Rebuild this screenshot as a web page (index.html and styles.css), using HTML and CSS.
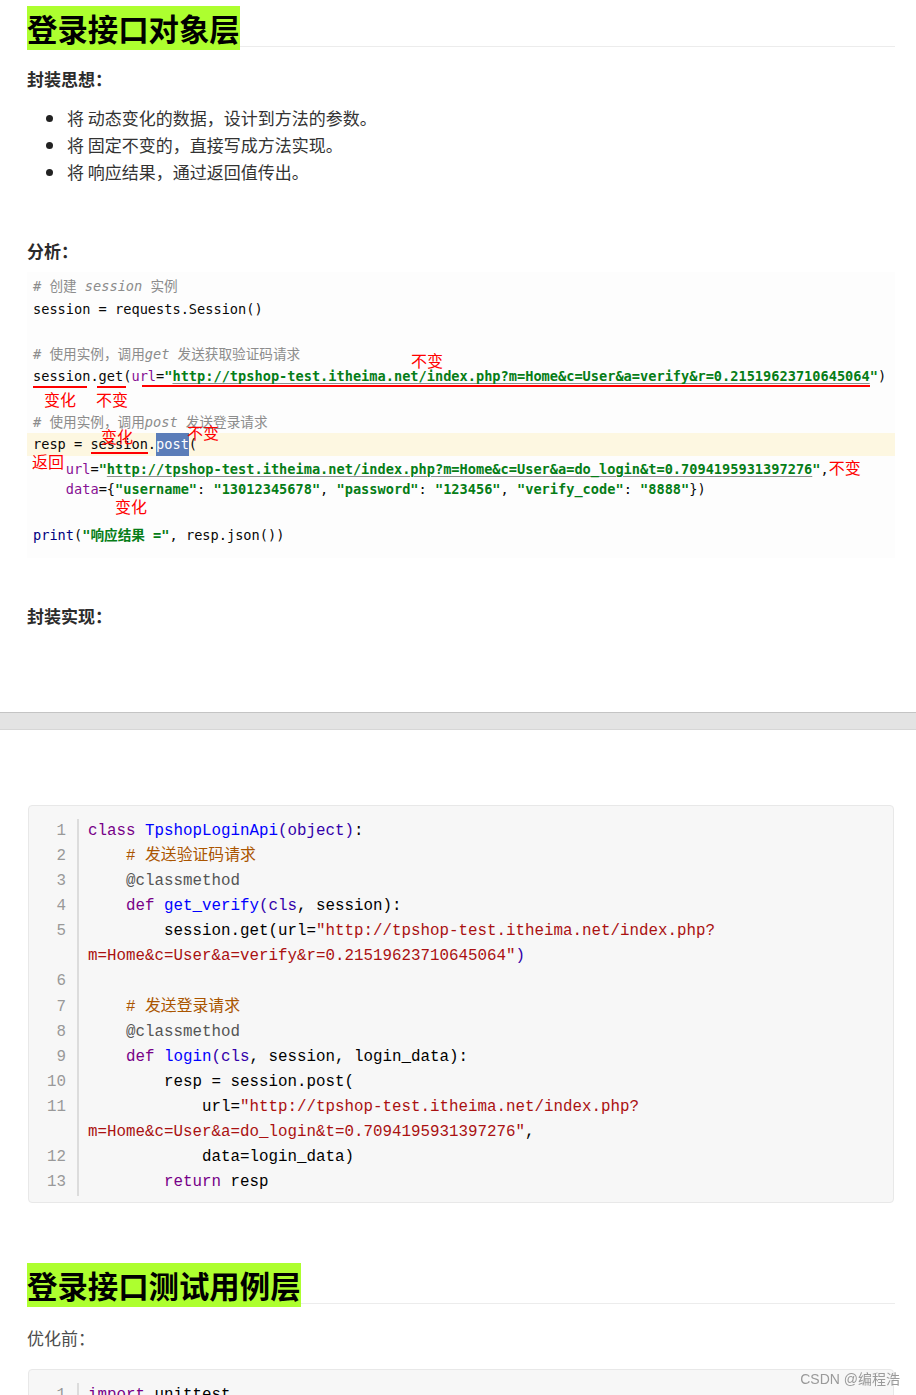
FILE: index.html
```html
<!DOCTYPE html>
<html lang="zh-CN">
<head>
  <meta charset="UTF-8" />
  <meta name="viewport" content="width=device-width, initial-scale=1.0"/>
  <title>登录接口对象层</title>
  <link rel="stylesheet" href="styles.css">
</head>
<body>
  <section class="article">
    <h2 class="title"><span class="mark">登录接口对象层</span></h2>
    <p class="label label-idea">封装思想：</p>
    <ul class="points">
      <li>将 动态变化的数据，设计到方法的参数。</li>
      <li>将 固定不变的，直接写成方法实现。</li>
      <li>将 响应结果，通过返回值传出。</li>
    </ul>
    <p class="label label-analyse">分析：</p>

    <div class="shot">
      <div class="row"><span class="c"># 创建 <i>session</i> 实例</span></div>
      <div class="row">session = requests.Session()</div>
      <div class="row"></div>
      <div class="row"><span class="c"># 使用实例，调用<i>get</i> 发送获取验证码请求</span></div>
      <div class="row">session.get(<span class="kw">url</span>=<span class="s">"<u>http://tpshop-test.itheima.net/index.php?m=Home&amp;c=User&amp;a=verify&amp;r=0.21519623710645064</u>"</span>)</div>
      <div class="row"></div>
      <div class="row"><span class="c"># 使用实例，调用<i>post</i> 发送登录请求</span></div>
      <div class="row row-current">resp = session.<span class="sel">post</span>(</div>
      <div class="row">    <span class="kw">url</span>=<span class="s">"<u>http://tpshop-test.itheima.net/index.php?m=Home&amp;c=User&amp;a=do_login&amp;t=0.7094195931397276</u>"</span>,<span class="note-inline">不变</span></div>
      <div class="row">    <span class="kw">data</span>={<span class="s">"username"</span>: <span class="s">"13012345678"</span>, <span class="s">"password"</span>: <span class="s">"123456"</span>, <span class="s">"verify_code"</span>: <span class="s">"8888"</span>})</div>
      <div class="row"></div>
      <div class="row"><span class="fn">print</span>(<span class="s">"响应结果 ="</span>, resp.json())</div>

      <span class="note n1">不变</span>
      <span class="note n2">变化</span>
      <span class="note n3">不变</span>
      <span class="note n4">变化</span>
      <span class="note n5">不变</span>
      <span class="note n6">返回</span>
      <span class="note n7">变化</span>
      <span class="stroke u1"></span>
      <span class="stroke u2"></span>
      <span class="stroke u3"></span>
      <span class="stroke u4"></span>
    </div>

    <p class="label label-impl">封装实现：</p>
  </section>

  <div class="page-break"></div>

  <section class="article">
    <div class="code">
      <div class="nums">
        <div>1</div><div>2</div><div>3</div><div>4</div><div>5</div><div>&nbsp;</div>
        <div>6</div><div>7</div><div>8</div><div>9</div><div>10</div><div>11</div>
        <div>&nbsp;</div><div>12</div><div>13</div>
      </div>
<pre class="src"><span class="k">class</span> <span class="d">TpshopLoginApi</span><span class="b">(object)</span>:
    <span class="cm"># 发送验证码请求</span>
    <span class="m">@classmethod</span>
    <span class="k">def</span> <span class="d">get_verify</span><span class="b">(cls</span>, session):
        session.get(url=<span class="str">"http://tpshop-test.itheima.net/index.php?</span>
<span class="str">m=Home&amp;c=User&amp;a=verify&amp;r=0.21519623710645064"</span><span class="b">)</span>

    <span class="cm"># 发送登录请求</span>
    <span class="m">@classmethod</span>
    <span class="k">def</span> <span class="d">login</span><span class="b">(cls</span>, session, login_data):
        resp = session.post(
            url=<span class="str">"http://tpshop-test.itheima.net/index.php?</span>
<span class="str">m=Home&amp;c=User&amp;a=do_login&amp;t=0.7094195931397276"</span>,
            data=login_data)
        <span class="k">return</span> resp</pre>
    </div>

    <h2 class="title title-second"><span class="mark">登录接口测试用例层</span></h2>
    <p class="label label-before">优化前：</p>

    <div class="code code-second">
      <div class="nums">
        <div>1</div>
      </div>
<pre class="src"><span class="k">import</span> unittest</pre>
    </div>
  </section>

  <div class="watermark">CSDN @编程浩</div>
</body>
</html>
```

FILE: styles.css
```css
* {
  box-sizing: border-box;
}

body {
  margin: 0;
  background: #fff;
  font-family: "Noto Sans CJK SC", "Noto Sans", sans-serif;
  color: #333;
}

.article {
  padding: 0 21px 0 27px;
}

/* headings with the green marker */
.title {
  margin: 10px 0 0;
  font-size: 30.4px;
  line-height: 36px;
  font-weight: bold;
  color: #000;
  border-bottom: 1px solid #ececec;
}

.title .mark {
  background: #adff2f;
}

.title-second {
  margin-top: 64px;
}

.label {
  margin: 0;
  font-size: 17px;
  line-height: 27px;
  font-weight: bold;
  color: #2b2b2b;
}

.label-idea {
  margin-top: 18px;
}

.label-analyse {
  margin-top: 52px;
}

.label-impl {
  margin-top: 44px;
}

.label-before {
  margin-top: 19.5px;
  font-weight: normal;
  color: #4d4d4d;
}

.points {
  list-style: none;
  margin: 12px 0 0;
  padding: 0 0 0 19px;
  font-size: 17px;
  line-height: 27px;
  color: #333;
}

.points li::before {
  content: "";
  display: inline-block;
  width: 7px;
  height: 7px;
  border-radius: 50%;
  background: #222;
  margin-right: 14px;
  vertical-align: 3px;
}

/* IDE screenshot with red notes */
.shot {
  position: relative;
  margin-top: 8px;
  padding: 3px 0 12px 6px;
  background: #fdfdfd;
  font-family: "DejaVu Sans Mono", "Noto Sans CJK SC", monospace;
  font-size: 13.64px;
  color: #080808;
}

.shot .row {
  height: 22.6px;
  line-height: 22.6px;
  white-space: pre;
}

.shot .row-current {
  background: #fdf7e1;
  margin-left: -6px;
  padding-left: 6px;
}

.shot .c {
  color: #8c8c8c;
}

.shot .c i {
  font-style: italic;
}

.shot .kw {
  color: #871094;
}

.shot .s {
  color: #067d17;
  font-weight: bold;
}

.shot .s u {
  text-decoration: underline;
  text-decoration-color: #8f8f8f;
  text-decoration-thickness: 1px;
  text-underline-offset: 2px;
}

.shot .fn {
  color: #000080;
}

.shot .sel {
  display: inline-block;
  height: 22.6px;
  background: #5b7db9;
  color: #fff;
}

.note-inline {
  color: #f00;
  font-family: "Noto Sans CJK SC", sans-serif;
  font-size: 16px;
}

.note {
  position: absolute;
  color: #f00;
  font-family: "Noto Sans CJK SC", sans-serif;
  font-size: 16px;
  line-height: 16px;
}

.n1 { left: 384px; top: 80px; }
.n2 { left: 17px; top: 119px; }
.n3 { left: 69px; top: 119px; }
.n4 { left: 74px; top: 156px; }
.n5 { left: 160px; top: 152px; }
.n6 { left: 5px; top: 181px; }
.n7 { left: 88px; top: 226px; }

.stroke {
  position: absolute;
  height: 2px;
  background: #f00;
}

.u1 { left: 6px; top: 114px; width: 54px; }
.u2 { left: 70px; top: 114px; width: 29px; }
.u3 { left: 115px; top: 113px; width: 728px; }
.u4 { left: 64px; top: 180px; width: 57px; }

/* stitched screenshot break */
.page-break {
  margin-top: 83px;
  height: 18px;
  background: #e3e3e3;
  border-top: 1px solid #c4c4c4;
  border-bottom: 1px solid #d6d6d6;
}

/* code block */
.code {
  display: flex;
  margin: 75px 1px 0;
  padding: 12.4px 0 6.5px;
  background: #f7f7f7;
  border: 1px solid #e8e8e8;
  border-radius: 4px;
  font-family: "Liberation Mono", "Noto Sans CJK SC", monospace;
  font-size: 15.83px;
  line-height: 25.14px;
}

.code-second {
  margin-top: 18.5px;
  padding-bottom: 30px;
}

.code .nums {
  width: 50px;
  padding-right: 11px;
  border-right: 2px solid #dcdcdc;
  text-align: right;
  color: #999;
}

.code .src {
  margin: 0;
  padding-left: 9px;
  font: inherit;
  color: #000;
}

.code .k { color: #708; }
.code .d { color: #00f; }
.code .b { color: #30a; }
.code .cm { color: #a50; }
.code .m { color: #555; }
.code .str { color: #a11; }

.watermark {
  position: fixed;
  right: 16px;
  bottom: 7px;
  font-family: "Liberation Sans", "Noto Sans CJK SC", sans-serif;
  font-size: 14px;
  color: #9a9a9a;
}
```
